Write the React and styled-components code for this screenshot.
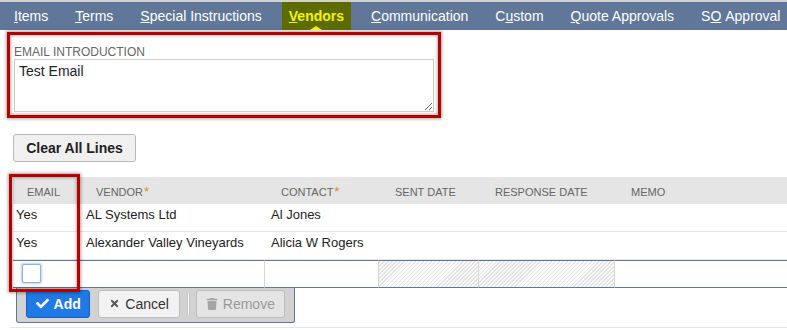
import React from "react";
import styled, { createGlobalStyle } from "styled-components";
import { FaCheck, FaTimes, FaTrash } from "react-icons/fa";

const GlobalStyle = createGlobalStyle`
  body {
    margin: 0;
    background: #fff;
    font-family: "Liberation Sans", Arial, sans-serif;
  }
`;

const Page = styled.div`
  width: 787px;
  height: 330px;
  overflow: hidden;
`;

const TabBar = styled.div`
  display: flex;
  gap: 13px;
  height: 28px;
  padding-left: 7px;
  background: #607799;
  border-top: 2px solid #d2d2d2;
  white-space: nowrap;
`;

const Tab = styled.div`
  position: relative;
  padding: 0 7px;
  line-height: 28px;
  font-size: 14px;
  color: ${(p) => (p.$active ? "#f4f400" : "#fff")};
  font-weight: ${(p) => (p.$active ? 700 : 400)};
  background: ${(p) => (p.$active ? "#5d6b00" : "transparent")};

  &::after {
    content: "";
    display: ${(p) => (p.$active ? "block" : "none")};
    position: absolute;
    left: 50%;
    bottom: 0;
    margin-left: -6px;
    border-left: 6px solid transparent;
    border-right: 6px solid transparent;
    border-bottom: 4px solid #f4f400;
  }
`;

const Callout = styled.div`
  box-sizing: border-box;
  margin: 2px 0 0 7px;
  width: 434px;
  height: 86px;
  padding: 10px 4px 0;
  border: 3px solid #b70000;
  box-shadow: 0 0 3px 1px rgba(0, 0, 0, 0.35),
    inset 0 0 3px 1px rgba(0, 0, 0, 0.3);
`;

const FieldLabel = styled.div`
  font-size: 12px;
  line-height: 14px;
  color: #666;
`;

const TextBox = styled.textarea`
  display: block;
  box-sizing: border-box;
  width: 420px;
  height: 53px;
  margin: 0;
  padding: 3px 4px;
  border: 1px solid #cccccc;
  font-family: "Liberation Sans", Arial, sans-serif;
  font-size: 14px;
  color: #222;
  outline: none;
`;

const ClearButton = styled.button`
  display: block;
  box-sizing: border-box;
  margin: 16px 0 0 13px;
  width: 123px;
  height: 28px;
  padding: 0;
  border: 1px solid #b9b9b9;
  border-radius: 3px;
  background: #f0f0f0;
  font-family: "Liberation Sans", Arial, sans-serif;
  font-size: 14px;
  font-weight: 700;
  color: #222;
`;

const TableArea = styled.div`
  position: relative;
  margin: 15px 0 0 10px;
  padding: 0 0 4px 3px;
  border-bottom: 1px solid #e6e6e6;
`;

const Grid = styled.div`
  display: grid;
  grid-template-columns: 65px 187px 114px 100px 136px 1fr;
`;

const HeadCell = styled.div`
  height: 27px;
  box-sizing: border-box;
  padding: 2px 0 0 ${(p) => p.$pad}px;
  display: flex;
  align-items: center;
  background: #e5e5e5;
  font-size: 11px;
  color: #666;
  white-space: nowrap;
`;

const Req = styled.span`
  color: #e08a1e;
  font-size: 13px;
  align-self: flex-start;
  margin-top: 5px;
  margin-left: 1px;
`;

const Cell = styled.div`
  height: 28px;
  box-sizing: border-box;
  padding: 3px 0 0 ${(p) => p.$pad}px;
  line-height: 16px;
  font-size: 13px;
  color: #222;
  border-bottom: 1px solid #e6e6e6;
  white-space: nowrap;
`;

const EditCell = styled.div`
  height: 28px;
  box-sizing: border-box;
  border-top: 1px solid #607799;
  border-bottom: 1px solid #607799;
  border-right: ${(p) => (p.$last ? "none" : "1px solid #d6d6d6")};
  padding: 3px 0 0 9px;
  background: ${(p) =>
    p.$locked
      ? "repeating-linear-gradient(-45deg, #e3e3e3 0 1px, #fbfbfb 1px 2.8px)"
      : "#fff"};
`;

const Check = styled.span`
  display: block;
  width: 17px;
  height: 17px;
  border: 1px solid #8db2e3;
  border-radius: 2px;
  background: #fff;
  box-shadow: 0 0 2px 1px #b8d2f2;
`;

const ActionBar = styled.div`
  display: flex;
  align-items: center;
  box-sizing: border-box;
  margin-left: 3px;
  width: 279px;
  height: 35px;
  padding: 0 9px 3px;
  background: #d2d2d2;
  border: 1px solid #607799;
  border-top: none;
  border-radius: 0 0 3px 3px;
`;

const ActionButton = styled.button`
  display: flex;
  align-items: center;
  justify-content: center;
  gap: 5px;
  box-sizing: border-box;
  height: 28px;
  width: ${(p) => p.$w}px;
  margin-left: ${(p) => p.$gap || 0}px;
  padding: 0;
  border: 1px solid ${(p) => (p.$primary ? "#1461c6" : "#bdbdbd")};
  border-radius: 3px;
  background: ${(p) =>
    p.$primary ? "#1f7ae6" : p.$disabled ? "#e4e4e4" : "#f2f2f2"};
  color: ${(p) => (p.$primary ? "#fff" : p.$disabled ? "#9a9a9a" : "#333")};
  font-family: "Liberation Sans", Arial, sans-serif;
  font-size: 14px;
  font-weight: ${(p) => (p.$primary ? 700 : 400)};

  svg {
    color: ${(p) => (p.$primary ? "#fff" : p.$disabled ? "#a5a5a5" : "#555")};
  }
`;

const Divider = styled.span`
  width: 1px;
  height: 22px;
  margin: 0 6px 0 7px;
  background: #fff;
  border-left: 1px solid #c2c2c2;
  border-right: 1px solid #c2c2c2;
`;

const Marker = styled.div`
  position: absolute;
  left: -1px;
  top: -3px;
  width: 71px;
  height: 118px;
  box-sizing: border-box;
  border: 3px solid #b70000;
  box-shadow: 0 0 3px 1px rgba(0, 0, 0, 0.35),
    inset 0 0 3px 1px rgba(0, 0, 0, 0.3);
  pointer-events: none;
`;

const tabs = [
  ["", "I", "tems"],
  ["", "T", "erms"],
  ["", "S", "pecial Instructions"],
  ["", "V", "endors", true],
  ["", "C", "ommunication"],
  ["C", "u", "stom"],
  ["", "Q", "uote Approvals"],
  ["S", "O", "\u00a0Approval"],
];

const headers = [
  ["EMAIL", 14],
  ["VENDOR", 18, true],
  ["CONTACT", 16, true],
  ["SENT DATE", 16],
  ["RESPONSE DATE", 16],
  ["MEMO", 16],
];

const rows = [
  ["Yes", "AL Systems Ltd", "Al Jones"],
  ["Yes", "Alexander Valley Vineyards", "Alicia W Rogers"],
];

export default function App() {
  return (
    <Page>
      <GlobalStyle />
      <TabBar>
        {tabs.map(([pre, key, post, active]) => (
          <Tab key={key + post} $active={active}>
            {pre}
            <u>{key}</u>
            {post}
          </Tab>
        ))}
      </TabBar>

      <Callout>
        <FieldLabel>EMAIL INTRODUCTION</FieldLabel>
        <TextBox defaultValue="Test Email" />
      </Callout>

      <ClearButton>Clear All Lines</ClearButton>

      <TableArea>
        <Grid>
          {headers.map(([label, pad, req]) => (
            <HeadCell key={label} $pad={pad}>
              {label}
              {req && <Req>*</Req>}
            </HeadCell>
          ))}
          {rows.map((r, i) =>
            [r[0], r[1], r[2], "", "", ""].map((v, j) => (
              <Cell key={i + "-" + j} $pad={[3, 8, 6, 6, 6, 6][j]}>
                {v}
              </Cell>
            ))
          )}
          <EditCell>
            <Check />
          </EditCell>
          <EditCell />
          <EditCell />
          <EditCell $locked />
          <EditCell $locked />
          <EditCell $last />
        </Grid>
        <ActionBar>
          <ActionButton $primary $w={65}>
            <FaCheck size={13} />
            Add
          </ActionButton>
          <ActionButton $w={82} $gap={8}>
            <FaTimes size={11} />
            Cancel
          </ActionButton>
          <Divider />
          <ActionButton $disabled $w={90}>
            <FaTrash size={12} />
            Remove
          </ActionButton>
        </ActionBar>
        <Marker />
      </TableArea>
    </Page>
  );
}
